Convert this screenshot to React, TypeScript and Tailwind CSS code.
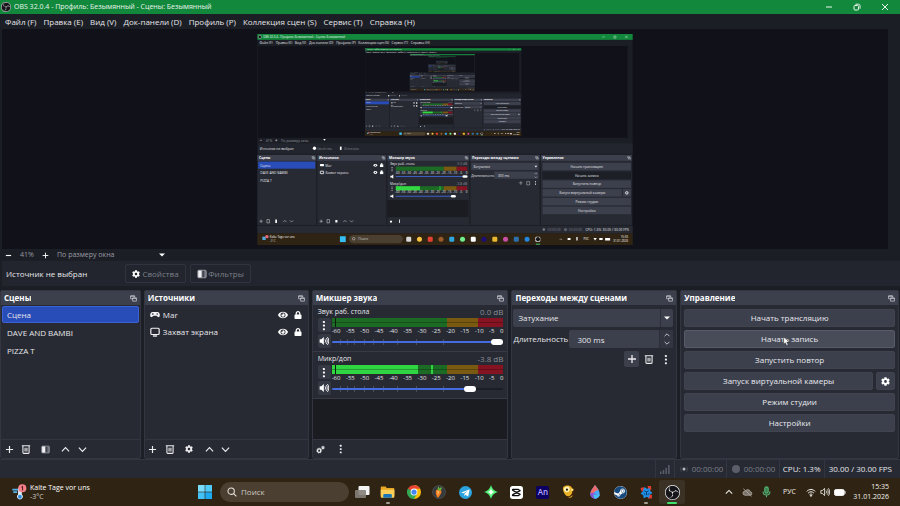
import React from 'react';
import clsx from 'clsx';
import { FaCog, FaEye, FaLock, FaSteam } from 'react-icons/fa';
import { SiObsstudio } from 'react-icons/si';

type IconProps = { className?: string };

const MENU = ['Файл (F)', 'Правка (E)', 'Вид (V)', 'Док-панели (D)', 'Профиль (P)', 'Коллекция сцен (S)', 'Сервис (T)', 'Справка (H)'];
const SCENES = ['Сцена', 'DAVE AND BAMBI', 'PIZZA T'];
const TICKS = [-60, -55, -50, -45, -40, -35, -30, -25, -20, -15, -10, -5, 0];
const CONTROLS = ['Начать трансляцию', 'Начать запись', 'Запустить повтор', 'Запуск виртуальной камеры', 'Режим студии', 'Настройки'];
const FADER_MARKS = [5, 9, 13, 19, 24, 30, 38, 49, 65];

// ---------- icons ----------

const ObsLogo = ({ className }: IconProps) => (
  <span className={clsx('flex shrink-0 items-center justify-center rounded-full bg-[#16151a] text-[#f2f2f4]', className)}>
    <SiObsstudio className="size-full" />
  </span>
);

const PlusIcon = ({ className }: IconProps) => (
  <svg viewBox="0 0 10 10" className={className} stroke="currentColor" strokeWidth="1.300" fill="none">
    <path d="M5 1v8M1 5h8" />
  </svg>
);

const TrashIcon = ({ className }: IconProps) => (
  <svg viewBox="0 0 12 12" className={className} stroke="currentColor" strokeWidth="1.300" fill="none">
    <path d="M1 2h10M2.300 2v8.200c0 .6.4 1 1 1h5.400c.6 0 1-.4 1-1V2M4.900 4.500v4.500M7.100 4.500v4.500" />
  </svg>
);

const FilterIcon = ({ className }: IconProps) => (
  <svg viewBox="0 0 12 12" className={className}>
    <rect x="1" y="1.500" width="10" height="9" rx="1" fill="#6d7079" stroke="#a9abb3" />
    <path d="M1.500 2h4v8h-4z" fill="#f2f2f4" />
    <path d="M6.500 2h2v8h-2z" fill="#43464f" />
  </svg>
);

const Chevron = ({ className }: IconProps) => (
  <svg viewBox="0 0 10 10" className={className} stroke="currentColor" strokeWidth="1.300" fill="none">
    <path d="M1 7l4-4 4 4" />
  </svg>
);

const DotsIcon = ({ className }: IconProps) => (
  <svg viewBox="0 0 4 12" className={className} fill="currentColor">
    <rect x="1" y="1" width="2.200" height="2.200" rx=".5" />
    <rect x="1" y="5" width="2.200" height="2.200" rx=".5" />
    <rect x="1" y="9" width="2.200" height="2.200" rx=".5" />
  </svg>
);

const PopOutIcon = ({ className }: IconProps) => (
  <svg viewBox="0 0 12 12" className={className} stroke="currentColor" strokeWidth="1.200" fill="none">
    <path d="M4 6.500H1V1.500h7V4M1 2h7" />
    <path d="M4.500 5h6.500v5.500H4.500zM4.500 5.700H11" />
  </svg>
);

const SpeakerIcon = ({ className }: IconProps) => (
  <svg viewBox="0 0 12 12" className={className} fill="none" stroke="currentColor" strokeWidth="1.100">
    <path d="M.8 4h2l3-2.800v9.600L2.800 8h-2z" fill="currentColor" stroke="none" />
    <path d="M7.200 4c.9 1.200.9 2.800 0 4M8.700 2.600c1.600 2 1.600 4.800 0 6.800M10.100 1.300c2.200 2.800 2.200 6.600 0 9.400" />
  </svg>
);

const GamepadIcon = ({ className }: IconProps) => (
  <svg viewBox="0 0 12 8" className={className}>
    <path d="M3 1h6c1.800 0 2.800 2 2.800 4 0 1.500-.8 2.200-1.700 2.200C9 7.200 8.400 5.600 7.600 5.600H4.400C3.600 5.600 3 7.200 1.900 7.200 1 7.200.2 6.500.2 5 .2 3 1.200 1 3 1z" fill="#f4f4f6" />
    <path d="M2.200 3.400h2.200M3.300 2.300v2.200" stroke="#272a33" strokeWidth=".8" />
    <circle cx="8.600" cy="3.400" r=".9" fill="#272a33" />
  </svg>
);

const MonitorIcon = ({ className }: IconProps) => (
  <svg viewBox="0 0 12 12" className={className} fill="none" stroke="#f4f4f6" strokeWidth="1.400">
    <rect x="1" y="1.500" width="10" height="7.500" rx="1.200" />
    <path d="M3.500 10.800h5" strokeWidth="1.600" />
  </svg>
);

const GearsIcon = ({ className }: IconProps) => (
  <svg viewBox="0 0 12 12" className={className} fill="none" stroke="currentColor">
    <circle cx="4.200" cy="7.500" r="2.200" strokeWidth="1.700" />
    <circle cx="4.200" cy="7.500" r="3.300" strokeWidth="1" strokeDasharray="1.300 1.300" />
    <circle cx="9.300" cy="3.500" r="1.200" strokeWidth="1.400" />
    <circle cx="9.300" cy="3.500" r="2.100" strokeWidth=".7" strokeDasharray=".9 .8" />
  </svg>
);

const TriangleDown = ({ className }: IconProps) => (
  <svg viewBox="0 0 8 5" className={className} fill="currentColor">
    <path d="M0 .5h8l-4 4z" />
  </svg>
);

// ---------- captured desktop inside the preview ----------

const DOCKS = [
  { x: 0, w: 141, title: 'Сцены' },
  { x: 144, w: 165, title: 'Источники' },
  { x: 312, w: 196, title: 'Микшер звука' },
  { x: 511, w: 166, title: 'Переходы между сценами' },
  { x: 680, w: 218, title: 'Управление' },
];

const TASK_COLORS = ['#d9d9d9', '#f6c343', '#e34133', '#9a5a2a', '#2ea6de', '#6df08b', '#ffffff', '#1d0d78', '#e9b62f', '#c84fa4', '#2d6fa8', '#2286dd', '#e8e8e8'];

// Below a readable size a label is drawn as a plain stroke of about its width
const TinyText = React.createContext(false);

type LabelProps = { x: number; y: number; children: string; fill?: string; anchor?: 'start' | 'middle' | 'end'; bold?: boolean; size?: number };

const Label = ({ x, y, children, fill = '#e6e6ea', anchor = 'start', bold, size = 8 }: LabelProps) => {
  const tiny = React.useContext(TinyText);
  if (tiny) {
    const w = children.length * size * 0.5;
    const left = anchor === 'start' ? x : anchor === 'middle' ? x - w / 2 : x - w;
    return <rect x={left} y={y - 5} width={w} height="4" fill={fill} opacity=".6" />;
  }
  return <text x={x} y={y} fill={fill} textAnchor={anchor} fontWeight={bold ? 700 : 400} fontSize={size}>{children}</text>;
};

const CapturedMeter = ({ y, label, db, level, volume }: { y: number; label: string; db: string; level: number; volume: number }) => (
  <g>
    <Label x={318} y={y - 3}>{label}</Label>
    <Label x={503} y={y - 3} fill="#8b8e98" anchor="end">{db}</Label>
    <rect x="332" y={y} width="115" height="10" fill="#1c6b25" />
    <rect x="332" y={y} width={level} height="10" fill="#33d843" />
    <rect x="447" y={y} width="31" height="10" fill="#7a5a10" />
    <rect x="478" y={y} width="25" height="10" fill="#861321" />
    {TICKS.map((t, i) => (
      <Label key={t} x={336 + i * 13.8} y={y + 17} anchor="middle" size={7}>{String(t)}</Label>
    ))}
    <rect x="332" y={y + 23} width={volume} height="2" fill="#456be0" />
    <rect x={326 + volume} y={y + 21} width="12" height="6" rx="3" fill="#fff" />
    <path d={`M319 ${y + 22}h3l4-3v10l-4-3h-3z`} fill="#fff" />
    <path d={`M323 ${y + 1}v10`} stroke="#fff" strokeWidth="2" strokeDasharray="2 2" />
  </g>
);

const CapturedScreen = ({ depth }: { depth: number }) => (
  <TinyText.Provider value={depth < 3}>
    <rect width="900" height="506" fill="#1c1e25" />
    <rect width="900" height="14" fill="#12883c" />
    <circle cx="6" cy="7" r="4" fill="#16151a" stroke="#ddd" />
    <Label x={14} y={10} fill="#e9f5ec" size={7}>OBS 32.0.4 - Профиль: Безымянный - Сцены: Безымянный</Label>
    <path d="M827 7h6M855 5h5v5h-5zM882 4l6 6M888 4l-6 6" stroke="#e9f5ec" fill="none" />
    {MENU.map((m, i) => (
      <Label key={m} x={[5, 44, 90, 124, 189, 242, 322, 368][i]} y={25}>{m}</Label>
    ))}
    <rect x="2" y="29" width="886" height="220" fill="#11111a" />
    {depth > 0 && (
      <g transform="translate(258 34) scale(.4167)">
        <CapturedScreen depth={depth - 1} />
      </g>
    )}
    <path d="M6 255h5M43 255h5M45.500 252.500v5" stroke="#fff" />
    <Label x={20} y={258} fill="#9a9ca4">41%</Label>
    <Label x={57} y={258} fill="#9a9ca4">По размеру окна</Label>
    <path d="M158 252h6l-3 4z" fill="#fff" />
    <rect x="2" y="262" width="898" height="25" fill="#22252d" />
    <Label x={6} y={278}>Источник не выбран</Label>
    <circle cx="137" cy="274" r="4" fill="#fff" />
    <Label x={143} y={278} fill="#7c7f89">Свойства</Label>
    <rect x="198" y="270" width="4" height="8" fill="#fff" />
    <Label x={208} y={278} fill="#7c7f89">Фильтры</Label>
    {DOCKS.map(d => (
      <g key={d.title}>
        <rect x={d.x} y="290" width={d.w} height="168" fill="#272a33" />
        <rect x={d.x} y="290" width={d.w} height="14" fill="#3c404d" />
        <Label x={d.x + 4} y={300} fill="#fff" bold>{d.title}</Label>
        <path d={`M${d.x + d.w - 10} 294h5v3h-5zM${d.x + d.w - 8} 297h5v3h-5z`} stroke="#d6d7dc" fill="none" />
      </g>
    ))}
    <rect x="2" y="306" width="137" height="17" fill="#284cb8" />
    {SCENES.map((s, i) => (
      <Label key={s} x={7} y={318 + i * 18}>{s}</Label>
    ))}
    <rect x="150" y="312" width="10" height="5" rx="2" fill="#fff" />
    <Label x={163} y={318}>Mar</Label>
    <rect x="151" y="329" width="8" height="6" rx="1" fill="none" stroke="#fff" strokeWidth="2" />
    <Label x={163} y={336}>Захват экрана</Label>
    {[315, 332].map(y => (
      <g key={y} fill="#fff">
        <ellipse cx="283" cy={y} rx="4.500" ry="3.500" />
        <circle cx="283" cy={y} r="1.500" fill="#272a33" />
        <rect x="294" y={y - 2} width="8" height="6" />
        <rect x="296" y={y - 5} width="4" height="4" />
      </g>
    ))}
    <CapturedMeter y={318} label="Звук раб. стола" db="0.0 dB" level={0} volume={166} />
    <CapturedMeter y={365} label="Микр/доп" db="-3.8 dB" level={58} volume={138} />
    <rect x="437" y="365" width="2" height="10" fill="#33d843" />
    <rect x="312" y="398" width="194" height="41" fill="#1b1c21" />
    <rect x="513" y="309" width="161" height="17" fill="#3c404d" />
    <Label x={518} y={321}>Затухание</Label>
    <path d="M665 316h6l-3 4z" fill="#fff" />
    <Label x={513} y={342}>Длительность</Label>
    <rect x="568" y="330" width="106" height="17" fill="#3c404d" />
    <Label x={577} y={342}>300 ms</Label>
    <path d="M665 336l3-3 3 3M665 342l3 3 3-3M632 353v9M627 357h9M646 354h7v8h-7z" stroke="#e6e6ea" fill="none" />
    <path d="M667 353v9" stroke="#fff" strokeWidth="2" strokeDasharray="2 1.500" />
    {CONTROLS.map((c, i) => (
      <g key={c}>
        <rect x="684" y={309 + i * 21} width={i === 3 ? 190 : 212} height="18" fill={i === 1 ? '#1d1f27' : '#3c404d'} />
        <Label x={i === 3 ? 779 : 790} y={321 + i * 21} anchor="middle">{c}</Label>
      </g>
    ))}
    <rect x="877" y="372" width="19" height="18" fill="#3c404d" />
    <circle cx="886" cy="381" r="3" fill="none" stroke="#fff" strokeWidth="2" />
    {[9, 153].map(x => (
      <path key={x} d={`M${x - 4} 449h8M${x} 445v8M${x + 14} 445h6v8h-6zM${x + 53} 451l4-4 4 4M${x + 69} 447l4 4 4-4`} stroke="#fff" fill="none" />
    ))}
    <path d="M43 445h4v8h-4zM187 446h5v6h-5zM318 448h5v4h-5zM340 445h2v8h-2z" fill="#fff" />
    <rect y="460" width="900" height="18" fill="#272a33" />
    <circle cx="687" cy="469" r="3" fill="#7c7f89" />
    <Label x={696} y={472} fill="#7c7f89">00:00:00</Label>
    <circle cx="739" cy="469" r="4" fill="#5b5e69" />
    <Label x={747} y={472} fill="#7c7f89">00:00:00</Label>
    <Label x={787} y={472}>CPU: 1.3%</Label>
    <Label x={891} y={472} anchor="end">30.00 / 30.00 FPS</Label>
    <rect y="478" width="900" height="28" fill="#2f2414" />
    <path d="M12 486h8v8h-8z" fill="#4fa9e0" />
    <circle cx="23" cy="486" r="4" fill="#ee6a75" />
    <Label x={30} y={490} fill="#fff" size={7}>Kalte Tage vor uns</Label>
    <Label x={30} y={499} fill="#ccc" size={7}>-3°C</Label>
    <rect x="198" y="485" width="14" height="14" fill="#36bdf4" />
    <rect x="220" y="482" width="129" height="20" rx="10" fill="#4a3f31" />
    <Label x={242} y={495} fill="#ccc">Поиск</Label>
    <circle cx="231" cy="491" r="3" fill="none" stroke="#fff" />
    {TASK_COLORS.map((c, i) => (
      <rect key={i} x={357 + i * 25.8} y="486" width="12" height="12" rx={i % 2 ? 6 : 3} fill={c} />
    ))}
    <circle cx="673" cy="492" r="5" fill="#16151a" />
    <rect x="668" y="503" width="10" height="2" fill="#3fe06c" />
    <path d="M725 494l3-3 3 3" stroke="#fff" fill="none" />
    <path d="M744 489h7v5h-7zM765 487h3v8h-3zM806 489h8l-4 6zM820 489h8v5h-8zM834 489h12v6h-12z" fill="#fff" />
    <Label x={782} y={495} fill="#fff" size={7}>РУС</Label>
    <Label x={889} y={490} fill="#fff" anchor="end" size={7}>15:35</Label>
    <Label x={889} y={500} fill="#fff" anchor="end" size={7}>31.01.2026</Label>
  </TinyText.Provider>
);

// ---------- docks ----------

const Dock = ({ title, children, footer }: { title: string; children: React.ReactNode; footer?: React.ReactNode }) => (
  <section className="flex min-w-0 flex-col rounded-[2px] border border-[#333640] bg-[#272a33]">
    <header className="flex h-[14px] shrink-0 items-center justify-between bg-[#3c404d] px-[3px]">
      <h2 className="truncate font-bold text-white">{title}</h2>
      <button aria-label={`Открепить: ${title}`} className="shrink-0 text-[#d6d7dc]">
        <PopOutIcon className="size-[7px]" />
      </button>
    </header>
    <div className="flex flex-1 flex-col">{children}</div>
    {footer && <footer className="flex h-[19px] shrink-0 items-center border-t border-[#333640]">{footer}</footer>}
  </section>
);

const ToolButton = ({ label, className, children }: { label: string; className?: string; children: React.ReactNode }) => (
  <button aria-label={label} className={clsx('flex h-4 items-center justify-center text-[#ededf0]', className ?? 'w-4')}>
    {children}
  </button>
);

const ListTools = ({ gear }: { gear?: boolean }) => (
  <div className="flex items-center">
    <ToolButton label="Добавить"><PlusIcon className="size-[9px]" /></ToolButton>
    <ToolButton label="Удалить" className="w-[18px]"><TrashIcon className="size-[10px]" /></ToolButton>
    <ToolButton label={gear ? 'Свойства' : 'Фильтры'} className="w-[21px]">
      {gear ? <FaCog className="size-[8px]" /> : <FilterIcon className="size-[9px]" />}
    </ToolButton>
    <ToolButton label="Вверх" className="w-[19px]"><Chevron className="size-[9px]" /></ToolButton>
    <ToolButton label="Вниз" className="w-[14px]"><Chevron className="size-[9px] rotate-180" /></ToolButton>
  </div>
);

const SourceRow = ({ name, icon }: { name: string; icon: React.ReactNode }) => (
  <li className="flex h-[17px] items-center pr-[6px] pl-[5px]">
    {icon}
    <span className="ml-[3px] flex-1 truncate">{name}</span>
    <button aria-label={`Видимость: ${name}`}><FaEye className="size-[10px] text-white" /></button>
    <button aria-label={`Блокировка: ${name}`} className="ml-[6px]"><FaLock className="size-[8px] text-white" /></button>
  </li>
);

const Channel = ({ name, db, volume, level, peak }: { name: string; db: string; volume: number; level: number; peak?: number }) => (
  <div className="flex h-[47px] flex-col border-b border-[#383b46] pr-[4px] pl-[5px]">
    <div className="flex h-[13px] items-center justify-between">
      <span className="text-[7px]">{name}</span>
      <span className="text-[#8b8e98]">{db}</span>
    </div>
    <div className="flex gap-[1px]">
      <div className="flex w-[13px] flex-col gap-[2px]">
        <button aria-label={`Меню: ${name}`} className="flex h-[14px] items-center justify-center rounded-[2px] bg-[#353944] text-white">
          <DotsIcon className="h-[11px]" />
        </button>
        <button aria-label={`Заглушить: ${name}`} className="flex h-[14px] items-center justify-center rounded-[2px] bg-[#353944] text-white">
          <SpeakerIcon className="size-[10px]" />
        </button>
      </div>
      <div className="flex min-w-0 flex-1 flex-col">
        <div className="relative flex h-[9px]">
          <div className="w-[67%] bg-[#1c6b25]" />
          <div className="w-[18%] bg-[#7a5a10]" />
          <div className="flex-1 bg-[#861321]" />
          <div className="absolute inset-y-0 left-0 bg-[#2fd642]" style={{ width: `${level}%` }} />
          {peak && <div className="absolute inset-y-0 w-[2px] bg-[#2fd642]" style={{ left: `${peak}%` }} />}
          <div className="absolute inset-y-0 left-[3px] w-px bg-[#0c1d10]" />
          <div className="absolute inset-x-0 top-[4px] h-px bg-black/25" />
        </div>
        <div className="flex h-[8px] justify-between text-[6px] leading-[8px] text-[#e4e4e8]">
          {TICKS.map(t => <span key={t}>{t}</span>)}
        </div>
        <div className="relative flex h-[14px] items-center">
          {FADER_MARKS.map(m => (
            <span key={m} className="absolute h-[6px] w-px bg-[#4a4e5c]" style={{ left: `${m}%` }} />
          ))}
          <input
            type="range"
            aria-label={`Громкость: ${name}`}
            defaultValue={volume}
            className="relative h-[2px] w-full appearance-none rounded-full [&::-webkit-slider-thumb]:h-[6px] [&::-webkit-slider-thumb]:w-[12px] [&::-webkit-slider-thumb]:appearance-none [&::-webkit-slider-thumb]:rounded-full [&::-webkit-slider-thumb]:bg-white"
            style={{ background: `linear-gradient(to right, #456be0 ${volume}%, #1c1e25 ${volume}%)` }}
          />
        </div>
      </div>
    </div>
  </div>
);

const PanelButton = ({ label, active, children }: { label: string; active?: boolean; children?: React.ReactNode }) => (
  <button
    className={clsx(
      'relative h-[18px] min-w-0 flex-1 rounded-[2px] border text-center text-[#e9e9ee]',
      active ? 'border-[#565a69] bg-[#484c59]' : 'border-[#41444f] bg-[#3c404d]',
    )}
  >
    {label}
    {children}
  </button>
);

// ---------- taskbar ----------

const TaskIcon = ({ label, children, running, active }: { label: string; children: React.ReactNode; running?: boolean; active?: boolean }) => (
  <button aria-label={label} className={clsx('relative flex h-[24px] flex-1 items-center justify-center rounded-[3px]', active && 'bg-[#3b3225]')}>
    {children}
    {running && <span className={clsx('absolute bottom-0 h-[2px] rounded-full', active ? 'w-[10px] bg-[#3fe06c]' : 'w-[4px] bg-[#a39c92]')} />}
  </button>
);

const TaskIcons = () => (
  <div className="flex w-[336px] items-center">
    <TaskIcon label="Представление задач">
      <svg viewBox="0 0 16 14" className="h-[14px] w-[16px]">
        <rect x="4.500" y="1" width="11" height="9" rx="1" fill="#f3f3f3" />
        <rect x="1" y="5" width="11" height="8" rx="1" fill="#858078" opacity=".9" />
      </svg>
    </TaskIcon>
    <TaskIcon label="Проводник" running>
      <svg viewBox="0 0 16 14" className="h-[14px] w-[15px]">
        <path d="M.8 2c0-.6.4-1 1-1h4l1.500 1.700h7c.6 0 1 .4 1 1V11H.8z" fill="#e9a823" />
        <path d="M.8 4.500h14.500V12c0 .6-.4 1-1 1H1.800c-.6 0-1-.4-1-1z" fill="#fbd05a" />
        <path d="M3.500 13V10.500c0-.8.6-1.300 1.300-1.300h6.500c.7 0 1.300.5 1.300 1.300V13z" fill="#1976b9" />
      </svg>
    </TaskIcon>
    <TaskIcon label="Chrome">
      <svg viewBox="0 0 24 24" className="size-[14px]">
        <path d="M12 12V0a12 12 0 0 1 0 24z" fill="#fbbc05" />
        <path d="M12 12L1.600 6A12 12 0 0 0 12 24l5.200-9z" fill="#34a853" />
        <path d="M1.600 6A12 12 0 0 1 22.400 6.500H12v6z" fill="#ea4335" />
        <circle cx="12" cy="12" r="5.800" fill="#fff" />
        <circle cx="12" cy="12" r="4.500" fill="#4285f4" />
      </svg>
    </TaskIcon>
    <TaskIcon label="FL Studio">
      <svg viewBox="0 0 24 24" className="size-[14px]">
        <circle cx="12" cy="12" r="11" fill="#35393d" stroke="#5d6265" />
        <path d="M7 9c2-2.500 7-1.500 9.500 1.500-1 5-4 10-7 11.500C7 18 5.500 12.500 7 9z" fill="#f07e22" />
        <path d="M9 10c1.500-.5 3 .2 3.500 1-.5 3-1.500 5-3 7z" fill="#ffb35c" />
        <path d="M10.500 9.500C9 6 10 3.500 11.500 2.500c1 1.500 1.200 3 .8 4.300C13.500 4.500 15.500 4 17 4.500c-.3 2.700-1.700 4.500-4 5.500z" fill="#69b637" />
      </svg>
    </TaskIcon>
    <TaskIcon label="Telegram">
      <svg viewBox="0 0 24 24" className="size-[13px]">
        <circle cx="12" cy="12" r="12" fill="#2ba3df" />
        <path d="M4.500 11.800L18.500 6.300c.7-.2 1.200.2 1 1.100l-2.400 11c-.2.800-.7 1-1.300.6l-3.600-2.700-1.800 1.800c-.3.300-.6.100-.6-.3l.3-3.400 6.500-5.900-8 5-3.900-1.200c-.6-.2-.6-.4-.2-.5z" fill="#fff" />
      </svg>
    </TaskIcon>
    <TaskIcon label="Ассистент">
      <svg viewBox="0 0 24 24" className="size-[14px]">
        <path d="M12 0c2 6 4 9.500 12 12-8 2.500-10 6-12 12-2-6-4-9.500-12-12C8 9.500 10 6 12 0z" fill="#4cec73" />
        <path d="M12 5c.7 4.500 2.500 6.300 7 7-4.500.7-6.300 2.500-7 7-.7-4.500-2.500-6.300-7-7 4.500-.7 6.300-2.500 7-7z" fill="#effff0" />
      </svg>
    </TaskIcon>
    <TaskIcon label="CapCut">
      <svg viewBox="0 0 24 24" className="size-[13px]">
        <rect width="24" height="24" rx="5" fill="#fff" />
        <path d="M19.500 8L6 15.500c-1 .6-1.500 1-1.500 1.500s.5.800 1.200.8h9.600c1 0 1.500-.5 1.500-1.800M19.500 16L6 8.500c-1-.6-1.500-1-1.500-1.500s.5-.8 1.200-.8h9.600c1 0 1.500.5 1.500 1.800" fill="none" stroke="#0b0b0b" strokeWidth="2.300" />
      </svg>
    </TaskIcon>
    <TaskIcon label="Adobe Animate">
      <span className="flex h-[13px] w-[13px] items-center justify-center rounded-[2px] bg-[#0c0160] text-[8px] font-semibold text-[#b4a7ff]">An</span>
    </TaskIcon>
    <TaskIcon label="Игра">
      <svg viewBox="0 0 24 24" className="size-[14px]">
        <path d="M3 3c4-3.500 13-4 17 .5s4 10.500 1 14.500-9 6-13 5c1-2 1-3.500-.5-5C3 15 0 7 3 3z" fill="#3b220c" />
        <path d="M2.500 3c4-3.500 12-3 14 1s1.500 10-1 12.500-5 3-7.500 2.500C4 16-.5 7 2.500 3z" fill="#e9b126" />
        <path d="M5 4c3-2 7-2 8 1s0 6-3 7-6-1-6.500-3S3.500 5 5 4z" fill="#fff3b8" />
        <circle cx="8.500" cy="8" r="1.800" fill="#24150a" />
        <circle cx="17.500" cy="8" r="2.200" fill="#ffe580" />
        <path d="M10 20c3 1 6 0 8-3 0 5-5 6-8 3z" fill="#e9b126" />
      </svg>
    </TaskIcon>
    <TaskIcon label="Графика">
      <svg viewBox="0 0 24 24" className="size-[14px]">
        <path d="M12 0c5 6 8 10 8 15a8 8.500 0 0 1-16 0C4 10 8 6 12 0z" fill="#4aa9f5" />
        <path d="M12 0C9 5 4 10 4 15c3 1 6-2 8-4s5-2 6-2c-1.500-3-4-6-6-9z" fill="#f06a6a" />
        <path d="M4 15c0 5 4 8.500 8 8.500s7-3 8-6c-4 1-6-1-8-3s-5-1-8 .5z" fill="#8c53d6" />
        <path d="M10 15c3 3 7 3 10 1 0 4-4 7.500-8 7.500-2-2-3-5-2-8.500z" fill="#43c5ef" />
      </svg>
    </TaskIcon>
    <TaskIcon label="Steam">
      <span className="rounded-full bg-white">
        <FaSteam className="size-[13px] text-[#174a7c]" />
      </span>
    </TaskIcon>
    <TaskIcon label="Утилита" running>
      <svg viewBox="0 0 24 24" className="size-[13px]">
        <path d="M14 0h6l1 6-5 3zM14 17l8-1v7h-7zM1 4l5-2 3 5-6 3z" fill="#e33a30" />
        <path d="M8 2l5 3 5-1 1 5 4 4-5 3-1 6-5-2-5 3-1-6-5-3 4-4z" fill="#208fe6" />
        <path d="M8 9l4 2 4-2M12 11v6M7 14l3 2M17 14l-3 2" stroke="#0b3c73" strokeWidth="1.800" fill="none" />
      </svg>
    </TaskIcon>
    <TaskIcon label="OBS Studio" running active>
      <ObsLogo className="size-[15px]" />
    </TaskIcon>
  </div>
);

const Tray = () => (
  <div className="ml-auto flex items-center pr-[11px] text-[7px] text-[#f3f0ea]">
    <button aria-label="Скрытые значки"><Chevron className="size-[8px]" /></button>
    <svg viewBox="0 0 14 12" className="ml-[9px] h-[9px] w-[11px]" fill="none" stroke="#aaa49a" strokeWidth="1.300">
      <path d="M3.500 9.500a2.600 2.600 0 0 1 .3-5.200A3.800 3.800 0 0 1 10.800 5a2.300 2.300 0 0 1 .2 4.500z" fill="#77716a" />
      <path d="M1.500 1l11 10" />
    </svg>
    <svg viewBox="0 0 10 14" className="ml-[9px] h-[12px] w-[9px]" fill="none" stroke="#54b574" strokeWidth="1.300">
      <rect x="3" y="1" width="4" height="7.500" rx="2" fill="#3c7d50" />
      <path d="M1 6.500c0 5.300 8 5.300 8 0M5 10.500V13" />
    </svg>
    <button className="ml-[12px]">РУС</button>
    <button aria-label="Сеть и звук" className="ml-[10px] flex items-center gap-[4px]">
      <svg viewBox="0 0 14 12" className="h-[9px] w-[10px]" fill="none" stroke="currentColor" strokeWidth="1.400">
        <path d="M1 4.500c3.500-3.600 8.500-3.600 12 0M3 6.800c2.400-2.400 5.600-2.400 8 0M5 9c1.200-1.200 2.800-1.200 4 0" />
        <circle cx="7" cy="10.500" r=".8" fill="currentColor" />
      </svg>
      <svg viewBox="0 0 12 12" className="size-[10px]" fill="none" stroke="currentColor">
        <path d="M1 4.300h1.800l2.700-2.600v8.600L2.800 7.700H1zM7.200 4.300c.8 1 .8 2.400 0 3.400M8.700 2.800c1.500 1.900 1.500 4.500 0 6.400M10.100 1.500c2 2.700 2 6.300 0 9" />
      </svg>
      <svg viewBox="0 0 14 8" className="h-[7px] w-[12px]">
        <rect x=".5" y=".5" width="11.500" height="7" rx="2" fill="#fff" stroke="#fff" />
        <path d="M13.300 2.500v3" stroke="#bbb" strokeWidth="1" />
      </svg>
    </button>
    <div className="w-[43px] text-right">
      <div>15:35</div>
      <div>31.01.2026</div>
    </div>
  </div>
);

// ---------- page ----------

export default function App() {
  return (
    <div className="flex h-screen min-h-[480px] flex-col bg-[#1c1e25] font-[family-name:'Open_Sans','Noto_Sans',sans-serif] text-[8px] leading-[10px] text-[#e6e6ea]">
      <div className="flex h-[14px] shrink-0 items-center bg-[#12883c] pr-[11px] pl-[1px] text-[#e9f5ec]">
        <ObsLogo className="size-[10px]" />
        <span className="ml-[3px] flex-1 truncate text-[7px]">OBS 32.0.4 - Профиль: Безымянный - Сцены: Безымянный</span>
        <div className="flex items-center gap-[20px]">
          <button aria-label="Свернуть">
            <svg viewBox="0 0 8 8" className="size-[8px]" stroke="currentColor"><path d="M1 4h6" /></svg>
          </button>
          <button aria-label="Свернуть в окно">
            <svg viewBox="0 0 8 8" className="size-[8px]" stroke="currentColor" fill="none">
              <rect x="1" y="2.500" width="4.500" height="4.500" rx="1" />
              <path d="M2.500 1.200h3c1 0 1.500.5 1.500 1.500v3" />
            </svg>
          </button>
          <button aria-label="Закрыть">
            <svg viewBox="0 0 8 8" className="size-[8px]" stroke="currentColor"><path d="M1 1l6 6M7 1L1 7" /></svg>
          </button>
        </div>
      </div>

      <nav className="flex h-[15px] shrink-0 items-center gap-[7px] px-[5px]">
        {MENU.map(item => <button key={item} className="whitespace-nowrap">{item}</button>)}
      </nav>

      <div className="mr-[12px] ml-[2px] min-h-0 flex-1 bg-[#11111a] pt-[5px] pb-[4px]">
        <svg viewBox="0 0 900 506" className="h-full w-full" role="img" aria-label="Захват экрана">
          <CapturedScreen depth={4} />
        </svg>
      </div>

      <div className="flex h-[12px] shrink-0 items-center pl-[5px] text-[7px] text-[#9a9ca4]">
        <button aria-label="Уменьшить" className="text-white">
          <svg viewBox="0 0 8 8" className="size-[7px]" stroke="currentColor" strokeWidth="1.300"><path d="M1 4h6" /></svg>
        </button>
        <span className="w-[30px] text-center">41%</span>
        <button aria-label="Увеличить" className="text-white"><PlusIcon className="size-[7px]" /></button>
        <label className="relative ml-[8px] flex items-center">
          <select aria-label="Масштаб" className="w-[108px] appearance-none">
            <option>По размеру окна</option>
          </select>
          <TriangleDown className="pointer-events-none absolute right-0 h-[4px] w-[6px] text-white" />
        </label>
      </div>

      <div className="ml-[2px] flex h-[25px] shrink-0 items-center bg-[#22252d] pl-[4px]">
        <span className="w-[119px]">Источник не выбран</span>
        <button disabled className="flex h-[19px] w-[61px] items-center justify-center gap-[2px] rounded-[2px] border border-[#31343e] text-[#7c7f89]">
          <FaCog className="size-[8px] text-white" />Свойства
        </button>
        <button disabled className="ml-[4px] flex h-[19px] w-[61px] items-center justify-center gap-[1px] rounded-[2px] border border-[#31343e] text-[#7c7f89]">
          <FilterIcon className="size-[10px]" />Фильтры
        </button>
      </div>

      <main className="mt-[4px] grid h-[169px] shrink-0 grid-cols-[141fr_165fr_197fr_166fr_219fr] gap-[3px] pr-[1px]">
        <Dock title="Сцены" footer={<ListTools />}>
          <ul className="flex flex-col gap-[1px] p-[1px]">
            {SCENES.map((scene, i) => (
              <li key={scene}>
                <button className={clsx('h-[17px] w-full rounded-[2px] border pl-[4px] text-left', i === 0 ? 'border-[#3c62d8] bg-[#284cb8]' : 'border-transparent')}>
                  {scene}
                </button>
              </li>
            ))}
          </ul>
        </Dock>

        <Dock title="Источники" footer={<ListTools gear />}>
          <ul className="flex flex-col py-[1px]">
            <SourceRow name="Mar" icon={<GamepadIcon className="h-[7px] w-[10px]" />} />
            <SourceRow name="Захват экрана" icon={<MonitorIcon className="size-[10px]" />} />
          </ul>
        </Dock>

        <Dock
          title="Микшер звука"
          footer={
            <>
              <ToolButton label="Дополнительные параметры"><GearsIcon className="size-[9px]" /></ToolButton>
              <ToolButton label="Меню микшера" className="w-[24px]"><DotsIcon className="h-[10px]" /></ToolButton>
            </>
          }
        >
          <Channel name="Звук раб. стола" db="0.0 dB" volume={100} level={0} />
          <Channel name="Микр/доп" db="-3.8 dB" volume={83} level={50} peak={58} />
          <div className="flex-1 bg-[#1b1c21]" />
        </Dock>

        <Dock title="Переходы между сценами">
          <div className="flex flex-col gap-[3px] py-[4px] pr-[3px] pl-[1px]">
            <div className="relative flex items-center">
              <select aria-label="Переход" className="h-[18px] w-full appearance-none rounded-[2px] bg-[#3c404d] pl-[5px]">
                <option>Затухание</option>
              </select>
              <span className="pointer-events-none absolute right-0 flex h-[18px] w-[13px] items-center justify-center border-l border-[#2c2f39]">
                <TriangleDown className="h-[4px] w-[6px] text-white" />
              </span>
            </div>
            <div className="flex items-center">
              <label htmlFor="duration" className="w-[56px] shrink-0">Длительность</label>
              <input id="duration" defaultValue="300 ms" className="h-[18px] min-w-0 flex-1 rounded-l-[2px] bg-[#3c404d] pl-[8px]" />
              <div className="flex h-[18px] w-[14px] flex-col items-center justify-center gap-[2px] border-l border-[#2c2f39] bg-[#333640]">
                <button aria-label="Больше"><Chevron className="size-[6px]" /></button>
                <button aria-label="Меньше"><Chevron className="size-[6px] rotate-180" /></button>
              </div>
            </div>
            <div className="flex items-center justify-end">
              <ToolButton label="Добавить переход" className="w-[15px] rounded-[2px] bg-[#3c404d]"><PlusIcon className="size-[10px]" /></ToolButton>
              <ToolButton label="Удалить переход" className="w-[20px]"><TrashIcon className="size-[10px]" /></ToolButton>
              <ToolButton label="Меню перехода" className="w-[14px]"><DotsIcon className="h-[11px]" /></ToolButton>
            </div>
          </div>
        </Dock>

        <Dock title="Управление">
          <div className="flex flex-col gap-[3px] px-[3px] py-[4px]">
            {CONTROLS.map((label, i) => (
              <div key={label} className="flex gap-[3px]">
                <PanelButton label={label} active={i === 1}>
                  {i === 1 && (
                    <svg viewBox="0 0 12 16" className="absolute top-[6px] left-[47%] h-[9px] w-[7px]">
                      <path d="M1 0v13l3-2.800 2.200 5 2.600-1.100-2.200-5H11z" fill="#fff" stroke="#222" strokeWidth=".8" />
                    </svg>
                  )}
                </PanelButton>
                {i === 3 && (
                  <button aria-label="Настройки виртуальной камеры" className="flex h-[18px] w-[19px] items-center justify-center rounded-[2px] border border-[#41444f] bg-[#3c404d] text-white">
                    <FaCog className="size-[9px]" />
                  </button>
                )}
              </div>
            ))}
          </div>
        </Dock>
      </main>

      <div className="flex h-[19px] shrink-0 items-center justify-end border-t border-[#333640] bg-[#272a33] text-[#7c7f89]">
        <div className="flex h-full w-[19px] items-center justify-center border-l border-[#333640]">
          <svg viewBox="0 0 10 9" className="h-[9px] w-[10px]" fill="#5b5e69">
            <path d="M0 6.500h1.500V9H0zM2.700 5h1.500v4H2.700zM5.400 2.800h1.500V9H5.400zM8.100 0h1.500v9H8.100z" />
          </svg>
        </div>
        <div className="flex h-full w-[52px] items-center gap-[3px] border-l border-[#333640] pl-[4px]">
          <svg viewBox="0 0 10 8" className="h-[8px] w-[10px]" fill="none" stroke="#454852">
            <circle cx="5" cy="4" r="1.500" fill="#b9bbc3" stroke="none" />
            <path d="M2.500 1.500c-1.200 1.500-1.200 3.500 0 5M7.500 1.500c1.200 1.500 1.200 3.500 0 5" />
          </svg>
          00:00:00
        </div>
        <div className="flex h-full w-[53px] items-center gap-[4px] border-l border-[#333640] pl-[5px]">
          <span className="size-[8px] rounded-full bg-[#5b5e69]" />
          00:00:00
        </div>
        <div className="flex h-full w-[45px] items-center justify-center border-l border-[#333640] text-[#e6e6ea]">CPU: 1.3%</div>
        <div className="flex h-full items-center border-l border-[#333640] pr-[8px] pl-[4px] text-[#e6e6ea]">30.00 / 30.00 FPS</div>
      </div>

      <footer className="flex h-[28px] shrink-0 items-center bg-[#2f2414]">
        <button className="flex w-[198px] items-center pl-[11px] text-left text-[7px] leading-[9px]">
          <svg viewBox="0 0 16 18" className="h-[17px] w-[16px]">
            <path d="M1 6h6M2 8.500h4" stroke="#55b2e8" strokeWidth="1.800" />
            <path d="M7 4v7a3 3 0 1 0 4 0V4z" fill="#dcecf6" />
            <circle cx="9" cy="13.500" r="2" fill="#2d8be0" />
            <circle cx="11.500" cy="4.500" r="4.300" fill="#f5818b" />
            <path d="M10.500 3.300l1.300-.8v4.300" stroke="#3a1013" fill="none" />
          </svg>
          <span className="ml-[3px]">
            <span className="block whitespace-nowrap text-white">Kalte Tage vor uns</span>
            <span className="block text-[#cfc9c0]">-3°C</span>
          </span>
        </button>
        <button aria-label="Пуск">
          <svg viewBox="0 0 14 14" className="size-[14px]">
            <path d="M0 0h6.700v6.700H0z" fill="#7adcfb" />
            <path d="M7.300 0H14v6.700H7.300z" fill="#4fcbf8" />
            <path d="M0 7.300h6.700V14H0z" fill="#42c2f5" />
            <path d="M7.300 7.300H14V14H7.300z" fill="#1eaaf0" />
          </svg>
        </button>
        <label className="ml-[8px] flex h-[20px] w-[129px] items-center gap-[4px] rounded-full bg-[#4a3f31] pl-[7px]">
          <svg viewBox="0 0 12 12" className="size-[10px]" fill="none" stroke="#e8e4dc" strokeWidth="1.300">
            <circle cx="5" cy="5" r="3.800" />
            <path d="M8 8l3.200 3.200" />
          </svg>
          <input type="search" aria-label="Поиск" placeholder="Поиск" className="w-[90px] placeholder:text-[#cfc9c0]" />
        </label>
        <TaskIcons />
        <Tray />
      </footer>
    </div>
  );
}
